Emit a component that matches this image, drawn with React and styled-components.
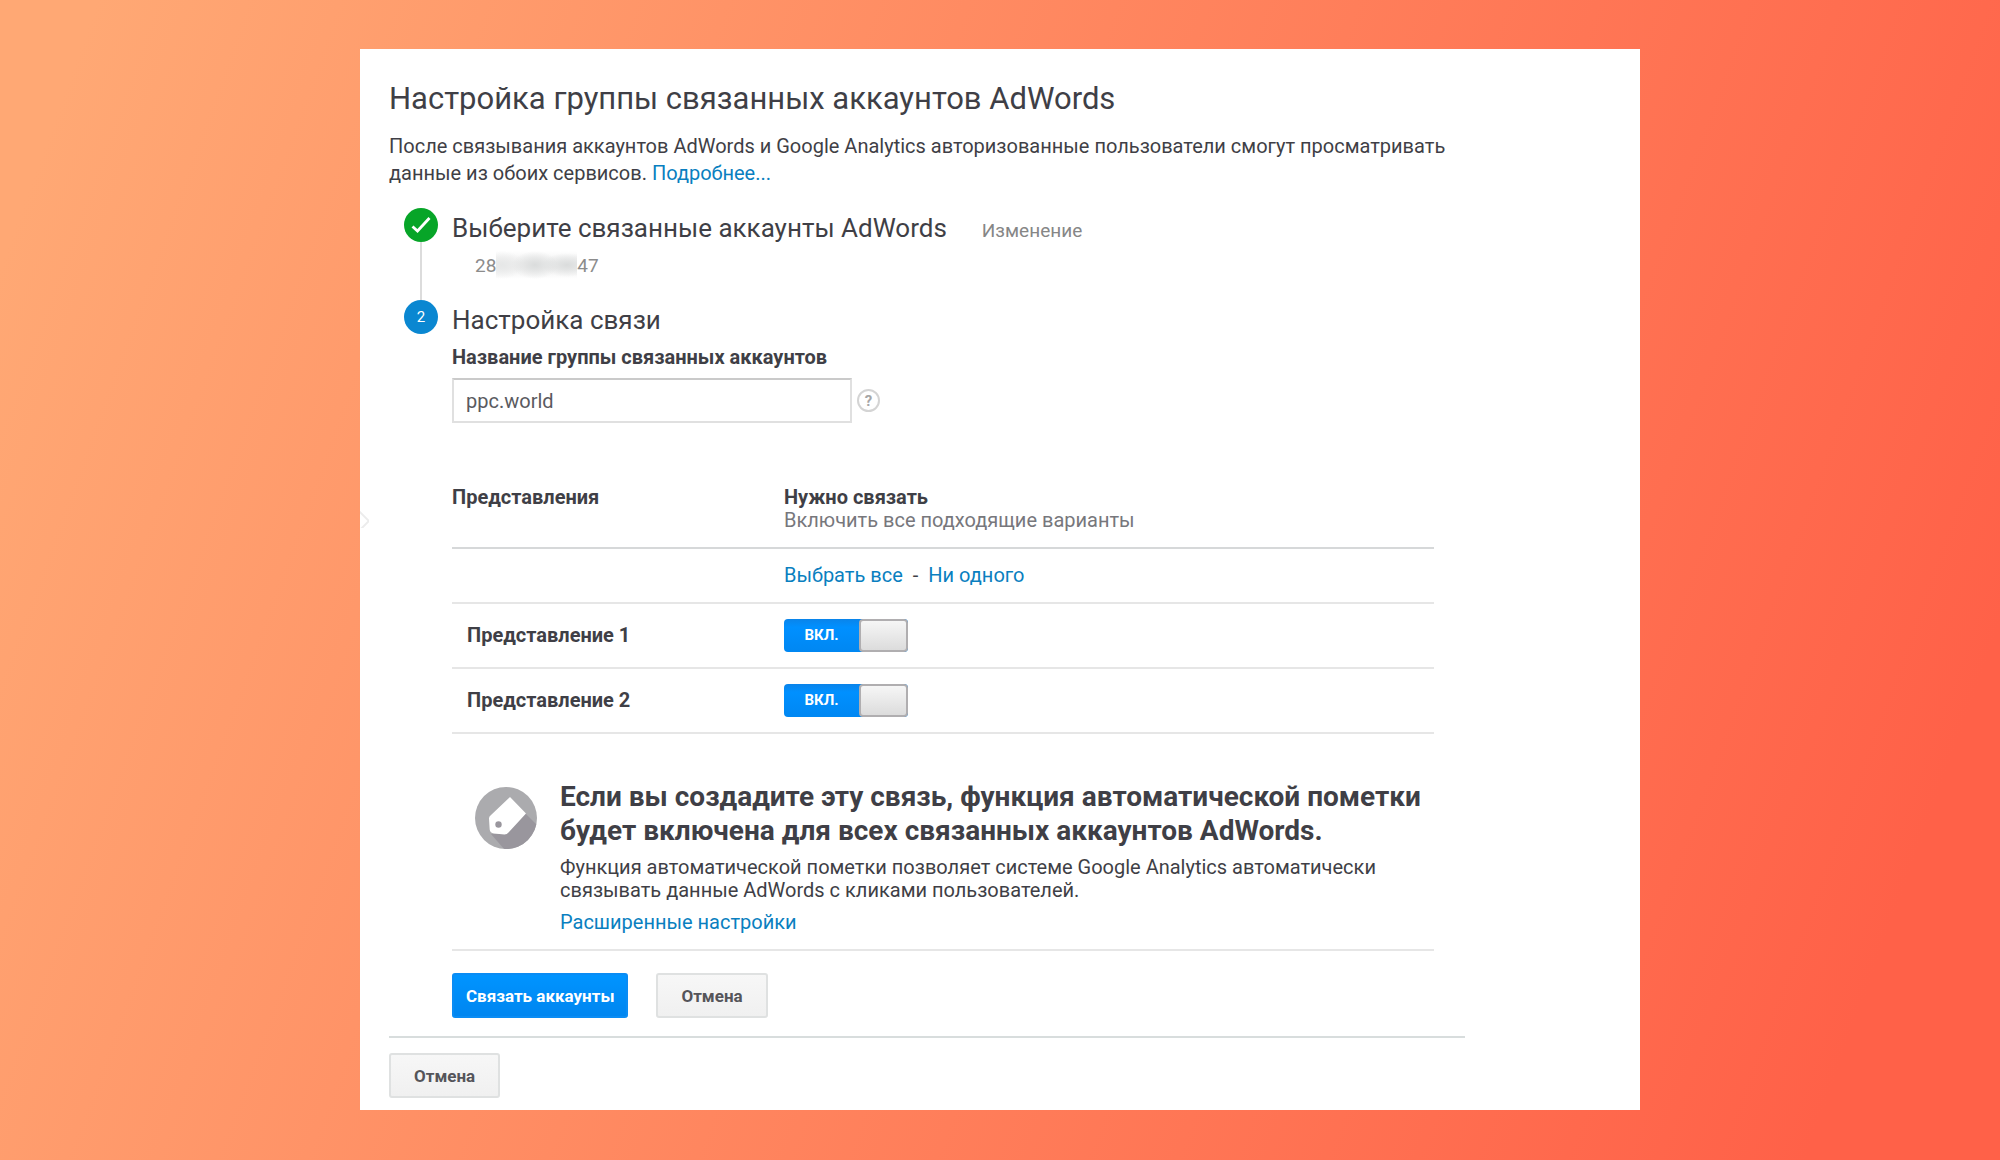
import { useState } from "react"
import styled, { createGlobalStyle } from "styled-components"

const GlobalStyle = createGlobalStyle`
  * {
    box-sizing: border-box;
  }

  body {
    margin: 0;
    font-family: Roboto, "Liberation Sans", sans-serif;
    color: #3f3f46;
    background: #ff6148;
  }

  h1, h2, h3, p {
    margin: 0;
  }
`

const ViewsData = ["Представление 1", "Представление 2"]

function CheckIcon() {
  return (
    <svg width="20" height="18" viewBox="0 0 20 18" fill="none" aria-hidden="true">
      <path d="M1.500 10.500L6.500 15L18.500 2" stroke="#fff" strokeWidth="2.800"/>
    </svg>
  )
}

function TagIcon() {
  return (
    <svg width="62" height="62" viewBox="0 0 62 62" aria-hidden="true">
      <defs>
        <clipPath id="tag-disc">
          <circle cx="31" cy="31" r="31"/>
        </clipPath>
      </defs>
      <circle cx="31" cy="31" r="31" fill="#ababae"/>
      <path d="M50 26L70 46L50 70H36L16 47L31 47Z" fill="#99969d" clipPath="url(#tag-disc)"/>
      <path d="M35 10L51 26.500L33.500 45.500Q32 47.500 29.500 47.500L19 46.500Q15 46 14.700 42.500L14 31.500Q14 29.500 15.500 28.500Z" fill="#fff"/>
      <circle cx="23.500" cy="37.500" r="3.200" fill="#99969d"/>
    </svg>
  )
}

function Switch({ id }) {
  const [on, setOn] = useState(true)

  return (
    <SwitchTrack $on={on}>
      <input type="checkbox" id={id} checked={on} onChange={() => setOn(!on)}/>
      <span className="switch__text">{on ? "ВКЛ." : "ВЫКЛ."}</span>
      <span className="switch__knob"/>
    </SwitchTrack>
  )
}

function ViewsTable() {
  return (
    <Table>
      <colgroup>
        <col className="views__name"/>
        <col/>
      </colgroup>
      <thead>
        <tr>
          <th scope="col">Представления</th>
          <th scope="col">
            Нужно связать
            <span>Включить все подходящие варианты</span>
          </th>
        </tr>
      </thead>
      <tbody>
        <LinksRow>
          <td/>
          <td>
            <TextLink href="#all">Выбрать все</TextLink>
            <span>-</span>
            <TextLink href="#none">Ни одного</TextLink>
          </td>
        </LinksRow>
        {ViewsData.map((name, index) => (
          <ViewRow key={name}>
            <td><label htmlFor={`view-${index}`}>{name}</label></td>
            <td><Switch id={`view-${index}`}/></td>
          </ViewRow>
        ))}
      </tbody>
    </Table>
  )
}

function App() {
  return (
    <Page>
      <GlobalStyle/>
      <Card>
        <Handle/>
        <Title>Настройка группы связанных аккаунтов AdWords</Title>
        <Intro>
          После связывания аккаунтов AdWords и Google Analytics авторизованные пользователи смогут просматривать
          данные из обоих сервисов. <TextLink href="#more">Подробнее...</TextLink>
        </Intro>

        <Steps>
          <Step>
            <Rail>
              <Badge $color="#07a528"><CheckIcon/></Badge>
              <RailLine/>
            </Rail>
            <StepBody>
              <StepHeading>
                <h2>Выберите связанные аккаунты AdWords</h2>
                <a href="#edit">Изменение</a>
              </StepHeading>
              <AccountId>28<Masked/>47</AccountId>
            </StepBody>
          </Step>

          <Step>
            <Rail>
              <Badge $color="#0a87d1">2</Badge>
            </Rail>
            <StepBody>
              <StepHeading>
                <h2>Настройка связи</h2>
              </StepHeading>
              <FieldLabel htmlFor="group-name">Название группы связанных аккаунтов</FieldLabel>
              <FieldRow>
                <TextInput id="group-name" type="text" defaultValue="ppc.world"/>
                <HelpButton type="button">?</HelpButton>
              </FieldRow>

              <ViewsTable/>

              <Notice>
                <TagIcon/>
                <div>
                  <h3>Если вы создадите эту связь, функция автоматической пометки будет включена для всех связанных аккаунтов AdWords.</h3>
                  <p>Функция автоматической пометки позволяет системе Google Analytics автоматически связывать данные AdWords с кликами пользователей.</p>
                  <TextLink href="#advanced">Расширенные настройки</TextLink>
                </div>
              </Notice>

              <Actions>
                <Button type="button" $primary>Связать аккаунты</Button>
                <Button type="button">Отмена</Button>
              </Actions>
            </StepBody>
          </Step>
        </Steps>

        <Footer>
          <Button type="button">Отмена</Button>
        </Footer>
      </Card>
    </Page>
  )
}

export default App

const Page = styled.div`
  min-height: 100vh;
  padding: 49px 0;
  background: linear-gradient(110deg, #ffa874 4%, #ff6148 92%);
`
const Card = styled.main`
  position: relative;
  width: 64%;
  min-width: 1100px;
  margin: 0 auto;
  padding: 32px 175px 12px 29px;
  background: #fff;
`
// collapsed side panel handle, peeks out from the left edge
const Handle = styled.span`
  position: absolute;
  left: 0;
  top: 461px;
  width: 9px;
  height: 18px;
  overflow: hidden;

  &::after {
    content: "";
    position: absolute;
    right: 2px;
    top: 3px;
    width: 12px;
    height: 12px;
    border: 2px solid #ececec;
    transform: rotate(45deg);
  }
`
const Title = styled.h1`
  font-size: 31px;
  font-weight: 400;
  line-height: 36px;
`
const Intro = styled.p`
  margin-top: 16px;
  font-size: 20px;
  line-height: 27px;
`
const TextLink = styled.a`
  color: #0a7fc0;
  text-decoration: none;
`
const Steps = styled.div`
  padding: 21px 0 0 15px;
`
const Step = styled.section`
  display: flex;
  align-items: stretch;
`
const Rail = styled.div`
  display: flex;
  flex-direction: column;
  align-items: center;
  width: 34px;
  margin-right: 14px;
`
const RailLine = styled.span`
  flex: 1;
  width: 2px;
  background: #dcdcdc;
`
const Badge = styled.span`
  display: flex;
  align-items: center;
  justify-content: center;
  width: 34px;
  height: 34px;
  border-radius: 50%;
  background: ${({ $color }) => $color};
  color: #fff;
  font-size: 15px;
`
const StepBody = styled.div`
  flex: 1;
  min-width: 0;
`
const StepHeading = styled.div`
  display: flex;
  align-items: baseline;
  gap: 35px;
  padding-top: 3px;
  line-height: 34px;

  h2 {
    font-size: 26px;
    font-weight: 400;
  }

  a {
    color: #868686;
    font-size: 19px;
    text-decoration: none;
  }
`
const AccountId = styled.p`
  display: flex;
  align-items: center;
  padding: 3px 0 21px 23px;
  color: #8c8c8c;
  font-size: 19px;
  line-height: 27px;
`
const Masked = styled.span`
  width: 81px;
  height: 28px;
  background:
    radial-gradient(closest-side, #dadcdc, transparent) 16px 0 / 46px 28px no-repeat,
    radial-gradient(closest-side, #dadcdc, transparent) 46px 2px / 50px 24px no-repeat,
    radial-gradient(closest-side, #e6e7e7, transparent) -16px 0 / 44px 28px no-repeat,
    linear-gradient(transparent, #f0f0f0 40%, #f0f0f0 60%, transparent);
`
const FieldLabel = styled.label`
  display: block;
  margin-top: 7px;
  font-size: 20px;
  font-weight: 700;
  line-height: 27px;
`
const FieldRow = styled.div`
  display: flex;
  align-items: center;
  gap: 5px;
  margin-top: 7px;
`
const TextInput = styled.input`
  width: 400px;
  height: 45px;
  padding: 0 12px;
  border: 2px solid #e0e0e0;
  border-top-color: #cacaca;
  background: #fff;
  color: #5a5a60;
  font: inherit;
  font-size: 20px;
`
const HelpButton = styled.button`
  width: 23px;
  height: 23px;
  padding: 0;
  border: 2px solid #d4d4d4;
  border-radius: 50%;
  background: #fff;
  color: #a6a6a6;
  font: inherit;
  font-size: 15px;
  font-weight: 700;
  line-height: 18px;
`
const Table = styled.table`
  width: calc(100% - 31px);
  margin-top: 60px;
  border-collapse: collapse;
  table-layout: fixed;
  font-size: 20px;
  line-height: 23px;

  .views__name {
    width: 332px;
  }

  tr {
    border-bottom: 2px solid #e6e6e6;
  }

  thead tr {
    border-bottom-color: #d6d8d9;
  }

  th, td {
    padding: 0;
    text-align: left;
  }

  th {
    padding: 3px 0 15px;
    vertical-align: top;
  }

  th span {
    display: block;
    color: #77777c;
    font-weight: 400;
  }
`
const LinksRow = styled.tr`
  height: 55px;

  span {
    margin: 0 10px;
  }
`
const ViewRow = styled.tr`
  height: 65px;
  font-weight: 700;

  label {
    padding-left: 15px;
  }
`
const SwitchTrack = styled.span`
  position: relative;
  display: flex;
  flex-direction: ${({ $on }) => ($on ? "row" : "row-reverse")};
  width: 124px;
  height: 33px;
  border-radius: 4px;
  background: ${({ $on }) => ($on ? "linear-gradient(#0a84ea, #0090ff 25%, #0087f2)" : "#c4c4c4")};

  input {
    position: absolute;
    inset: 0;
    width: 100%;
    height: 100%;
    margin: 0;
    opacity: 0;
    cursor: pointer;
  }

  .switch__text {
    flex: 1;
    color: #fff;
    font-size: 15px;
    line-height: 33px;
    text-align: center;
  }

  .switch__knob {
    width: 49px;
    border: 2px solid #b0aeb0;
    border-radius: 4px;
    background: linear-gradient(#f6f6f6, #dcdcdc);
  }
`
const Notice = styled.div`
  display: flex;
  align-items: flex-start;
  gap: 23px;
  margin-right: 31px;
  padding: 46px 0 15px 23px;
  border-bottom: 2px solid #e6e6e6;

  svg {
    flex: none;
    margin-top: 7px;
  }

  h3 {
    font-size: 28px;
    font-weight: 700;
    line-height: 34px;
  }

  p {
    margin: 8px 0 9px;
  }

  p, a {
    font-size: 20px;
    line-height: 23px;
  }
`
const Actions = styled.div`
  display: flex;
  gap: 28px;
  padding: 22px 0 18px;
`
const Button = styled.button`
  height: 45px;
  padding: 0 ${({ $primary }) => ($primary ? "12px" : "23px")};
  border: 2px solid ${({ $primary }) => ($primary ? "#0a8cf4" : "#dfe1e1")};
  border-radius: 3px;
  background: ${({ $primary }) => ($primary ? "linear-gradient(#0094ff, #0086f0)" : "linear-gradient(#f7f7f7, #f0f0f0)")};
  color: ${({ $primary }) => ($primary ? "#fff" : "#55555a")};
  font: inherit;
  font-size: 17px;
  font-weight: 700;
`
const Footer = styled.footer`
  padding-top: 15px;
  border-top: 2px solid #d8dddd;
`
